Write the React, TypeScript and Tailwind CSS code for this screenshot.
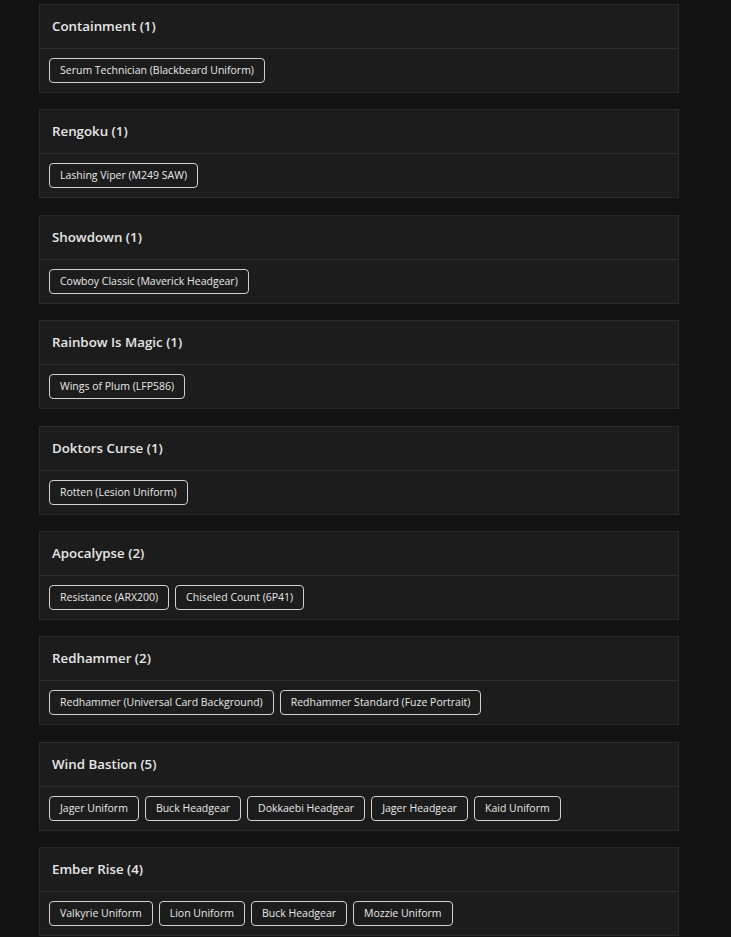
import React from 'react'

type Group = { name: string; items: string[] }

const groups: Group[] = [
  { name: 'Containment', items: ['Serum Technician (Blackbeard Uniform)'] },
  { name: 'Rengoku', items: ['Lashing Viper (M249 SAW)'] },
  { name: 'Showdown', items: ['Cowboy Classic (Maverick Headgear)'] },
  { name: 'Rainbow Is Magic', items: ['Wings of Plum (LFP586)'] },
  { name: 'Doktors Curse', items: ['Rotten (Lesion Uniform)'] },
  { name: 'Apocalypse', items: ['Resistance (ARX200)', 'Chiseled Count (6P41)'] },
  { name: 'Redhammer', items: ['Redhammer (Universal Card Background)', 'Redhammer Standard (Fuze Portrait)'] },
  { name: 'Wind Bastion', items: ['Jager Uniform', 'Buck Headgear', 'Dokkaebi Headgear', 'Jager Headgear', 'Kaid Uniform'] },
  { name: 'Ember Rise', items: ['Valkyrie Uniform', 'Lion Uniform', 'Buck Headgear', 'Mozzie Uniform'] },
]

export default function App() {
  return (
    <div className="min-h-screen bg-[#121212] pt-[4px] text-white" style={{ fontFamily: '"Open Sans", sans-serif' }}>
      <div className="ml-[39px] flex w-[640px] flex-col gap-[16.4px]">
        {groups.map((g) => (
          <div key={g.name} className="border border-[#2a2a2a] bg-[#1c1c1c]">
            <div className="border-b border-[#2e2e2e] px-[12px] py-[11px] text-[13.3px] font-semibold leading-[21px] text-[#e6e6e6]">
              {g.name} ({g.items.length})
            </div>
            <div className="flex flex-wrap gap-[6px] px-[9px] py-[9px]">
              {g.items.map((it) => (
                <span
                  key={it}
                  className="rounded-[4px] border border-[#d0d0d0] px-[10px] text-[10.5px] leading-[23px] text-[#e8e8e8]"
                >
                  {it}
                </span>
              ))}
            </div>
          </div>
        ))}
      </div>
    </div>
  )
}
